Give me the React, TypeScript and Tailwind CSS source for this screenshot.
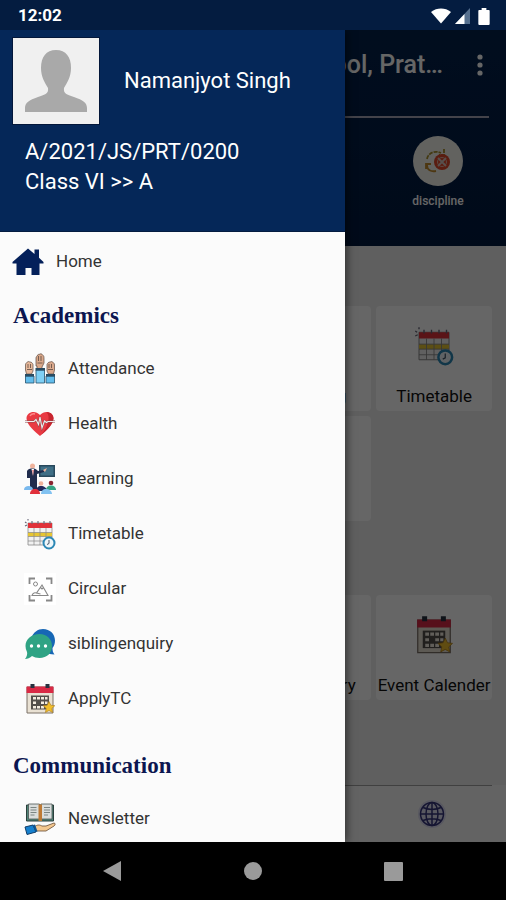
import type { ReactNode } from "react";

type Item = { label: string; icon: ReactNode };

const academics: Item[] = [
  { label: "Attendance", icon: <AttendanceIcon /> },
  { label: "Health", icon: <HealthIcon /> },
  { label: "Learning", icon: <LearningIcon /> },
  { label: "Timetable", icon: <TimetableIcon /> },
  { label: "Circular", icon: <CircularIcon /> },
  { label: "siblingenquiry", icon: <ChatIcon /> },
  { label: "ApplyTC", icon: <CalendarIcon /> },
];

const communication: Item[] = [{ label: "Newsletter", icon: <NewsletterIcon /> }];

const communicationTiles: Item[] = [
  { label: "Newsletter", icon: <NewsletterIcon /> },
  { label: "Message", icon: <ChatIcon /> },
  { label: "Class Diary", icon: <NewsletterIcon /> },
  { label: "Event Calender", icon: <CalendarIcon /> },
];

export default function App() {
  return (
    <div className="min-h-screen flex flex-col bg-black font-['Roboto','Noto_Sans',sans-serif]">
      <StatusBar />
      <div className="relative flex-1 flex flex-col overflow-hidden">
        <Dashboard />
        <div className="absolute inset-0 bg-black/60" />
        <Drawer />
      </div>
      <NavigationBar />
    </div>
  );
}

function StatusBar() {
  return (
    <div className="h-[30px] flex items-center justify-between bg-[#041c40] pt-[2px] pl-[18px] pr-4 text-white">
      <span className="text-[17px] font-bold">12:02</span>
      <div className="flex items-center gap-1">
        <svg width="20" height="16" viewBox="0 0 20 16" fill="#fff">
          <path d="M10 15.5 0 4C3 1.500 6.500.5 10 .5S17 1.500 20 4Z" />
        </svg>
        <svg width="15" height="16" viewBox="0 0 15 16">
          <path d="M15 0v16H0Z" fill="#56708f" />
          <path d="M9.500 6v10H0Z" fill="#fff" />
        </svg>
        <svg className="ml-1" width="12" height="17" viewBox="0 0 12 18" fill="#fff">
          <path d="M3.500 0h5v2H11a1 1 0 0 1 1 1v14a1 1 0 0 1-1 1H1a1 1 0 0 1-1-1V3a1 1 0 0 1 1-1h2.500Z" />
        </svg>
      </div>
    </div>
  );
}

function Drawer() {
  return (
    <aside className="absolute inset-y-0 left-0 w-[345px] overflow-hidden bg-[#fbfbfb] shadow-[2px_0_8px_rgba(0,0,0,0.5)]">
      <header className="h-[202px] bg-[#052758] border-b border-[#041c40] text-white">
        <div className="flex items-center gap-6 pt-[7px] pl-3">
          <div className="size-[88px] border border-[#03173a] bg-[#f0f0f0]">
            <svg viewBox="0 0 86 86">
              <path
                d="M43 12c10 0 15 7 15 18 0 9-4 15-7 20-1 6 4 7 10 9 9 3 13 6 13 11v4H12v-4c0-5 4-8 13-11 6-2 11-3 10-9-3-5-7-11-7-20 0-11 5-18 15-18Z"
                fill="#a9a9a9"
              />
            </svg>
          </div>
          <p className="text-[22px] leading-7">Namanjyot Singh</p>
        </div>
        <p className="mt-3 pl-[25px] text-[22px] leading-[30px]">
          A/2021/JS/PRT/0200
          <br />
          Class VI &gt;&gt; A
        </p>
      </header>

      <nav>
        <a href="#home" className="h-[59px] flex items-center gap-3 pl-3 text-[17px] text-[#333]">
          <HomeIcon />
          Home
        </a>
        <DrawerHeading>Academics</DrawerHeading>
        <DrawerList items={academics} />
        <div className="h-[15px]" />
        <DrawerHeading>Communication</DrawerHeading>
        <DrawerList items={communication} />
      </nav>
    </aside>
  );
}

function DrawerHeading({ children }: { children: ReactNode }) {
  return (
    <h2 className="h-[50px] flex items-center pl-[13px] font-['Liberation_Serif',serif] text-[23px] font-bold text-[#0c1650]">
      {children}
    </h2>
  );
}

function DrawerList({ items }: { items: Item[] }) {
  return (
    <ul>
      {items.map((item) => (
        <li key={item.label}>
          <a
            href={`#${item.label}`}
            className="h-[55px] flex items-center gap-3 pl-6 text-[17px] text-[#333]"
          >
            <span className="size-8">{item.icon}</span>
            {item.label}
          </a>
        </li>
      ))}
    </ul>
  );
}

// the screen that stays behind the open drawer
function Dashboard() {
  return (
    <main className="flex-1 flex flex-col bg-[#ededed]">
      <header className="h-[216px] bg-linear-to-b from-[#03224d] to-[#021a40] px-[17px] text-white">
        <div className="flex items-center justify-end gap-7 h-[70px]">
          <h1 className="text-[25px] font-medium">School, Prat…</h1>
          <button aria-label="More options" className="w-[18px] flex justify-center">
            <svg width="6" height="22" viewBox="0 0 6 22" fill="#fff">
              <circle cx="3" cy="3" r="2.600" />
              <circle cx="3" cy="11" r="2.600" />
              <circle cx="3" cy="19" r="2.600" />
            </svg>
          </button>
        </div>
        <div className="mt-4 border-t-2 border-[#a9a9b8] pt-[18px] flex justify-end">
          <a
            href="#discipline"
            className="w-[102px] flex flex-col items-center gap-[7px] text-xs font-medium"
          >
            <span className="size-[50px] rounded-full bg-[#f5f5ee] grid place-items-center">
              <DisciplineIcon />
            </span>
            discipline
          </a>
        </div>
      </header>

      <div className="flex-1 px-[14px]">
        <TileGrid items={academics} className="mt-[60px]" />
        <TileGrid items={communicationTiles} className="mt-[74px]" />
      </div>

      <div className="h-[57px] bg-[#f8f8f8] px-[14px]">
        <div className="h-full border-t border-[#a0a0a0] grid grid-cols-4">
          <a href="#web" aria-label="Website" className="col-start-4 grid place-items-center">
            <GlobeIcon />
          </a>
        </div>
      </div>
    </main>
  );
}

function TileGrid({ items, className }: { items: Item[]; className: string }) {
  return (
    <div className={`grid grid-cols-4 gap-[5px] ${className}`}>
      {items.map((item) => (
        <a
          key={item.label}
          href={`#${item.label}`}
          className="h-[105px] flex flex-col items-center justify-between rounded-sm bg-white pt-5 pb-[3px] text-[17px] leading-6 whitespace-nowrap text-[#111]"
        >
          <span className="size-10">{item.icon}</span>
          {item.label}
        </a>
      ))}
    </div>
  );
}

function NavigationBar() {
  return (
    <div className="h-[58px] grid grid-cols-3 bg-black px-[42px] text-[#9a9a9a]">
      <button aria-label="Back" className="grid place-items-center">
        <svg width="20" height="22" viewBox="0 0 20 22" fill="currentColor">
          <path d="M19 1v20L1 11Z" />
        </svg>
      </button>
      <button aria-label="Home" className="grid place-items-center">
        <span className="size-[18px] rounded-full bg-current" />
      </button>
      <button aria-label="Recent apps" className="grid place-items-center">
        <span className="size-[19px] rounded-[1px] bg-current" />
      </button>
    </div>
  );
}

function HomeIcon() {
  return (
    <svg width="32" height="28" viewBox="0 0 32 28" fill="#04205a">
      <path d="M16 .5 22.500 6V1.500h4.500v8.300l4.500 4.200v1.500h-4V27h-8v-7h-6v7h-9V15.500h-4V14Z" />
    </svg>
  );
}

function AttendanceIcon() {
  return (
    <svg viewBox="0 0 32 32" strokeLinejoin="round">
      <g stroke="#5b4a42" strokeWidth=".7">
        <path d="M12 13V5c0-2 1.500-1.500 1.500-3 1-1 2-.5 2.500-1 1-.5 2 0 2.500 1 1.500.5 1.500 2 1.500 4v4l-2 4v2h-5v-3Z" fill="#d9a789" />
        <path d="M1.500 17v-5c0-1.500 1-2.500 2-3 1-1 2 0 2.500 0 1.500 0 2.500 1 3 2.500V18l-1.500 3h-5Z" fill="#e8b99b" />
        <path d="M30.500 17v-5c0-1.500-1-2.500-2-3-1-1-2 0-2.500 0-1.500 0-2.500 1-3 2.500V18l1.500 3h5Z" fill="#dba98c" />
      </g>
      <g stroke="#24506c" strokeWidth=".8">
        <path d="M12 17h8.500v13H12Z" fill="#7fd0f5" />
        <path d="M1.500 23H10v7H1.500ZM22 23h8.500v7H22Z" fill="#63bdec" />
      </g>
      <path d="M11.500 15h9.500v2.500h-9.500ZM1 21h9v2.500H1ZM22 21h9v2.500h-9Z" fill="#294b61" />
      <path d="M14.500 3v5M17 3v5M4 11v4M6.500 11v4M25 11v4M27.500 11v4M13.500 10h5M3 16.500h5M24 16.500h5" stroke="#5b4a42" strokeWidth=".8" fill="none" />
    </svg>
  );
}

function HealthIcon() {
  return (
    <svg viewBox="0 0 32 32" fill="none">
      <path d="M16 28C12 24 3 18 2.500 10.500 2.500 4 11 1.500 16 7c5-5.500 13.500-3 13.500 3.500C29 18 20 24 16 28Z" fill="#e93a43" />
      <path d="M17 27c5-4 12-10 12.500-16.500C29.500 6 26 4 22.500 4.200 27 8 24 19 17 27Z" fill="#c7252f" />
      <path d="M6 8c1-2 3-2.500 5-2" stroke="#ff8b8b" strokeWidth="1.500" />
      <path d="M1 13.500h9l2-2 2.500 5L16 9l2 11 2.500-7 2 1.500 1.500-1h7" stroke="#8f4a4e" strokeWidth="1.900" />
      <path d="M1 13.500h9l2-2 2.500 5L16 9l2 11 2.500-7 2 1.500 1.500-1h7" stroke="#eee" strokeWidth="1.100" />
    </svg>
  );
}

function LearningIcon() {
  return (
    <svg viewBox="0 0 32 32">
      <path d="M15 2h16v12H15Z" fill="#28495c" />
      <path d="M16.500 3.500h13v9h-13Z" fill="#3f6f86" />
      <circle cx="8.500" cy="3" r="2.500" fill="#efb39c" />
      <path d="M3 8c1-2 3-2.500 5.500-2.500S12 6 14 8l6-1v2l-7 2v16H6V15H3Z" fill="#202c4d" />
      <path d="M7.500 6h2.500L9 13Z" fill="#fff" />
      <path d="M8.500 7h1l-.5 6Z" fill="#d33" />
      <path d="m19 7 4-2-2 4Z" fill="#efb39c" />
      <circle cx="17" cy="20.500" r="2.300" fill="#efb39c" />
      <path d="M12 28c0-3 2-5 5-5s6 2 6 5Z" fill="#222a5c" />
      <circle cx="27" cy="20" r="2.300" fill="#8b2631" />
      <path d="M22 27c0-3 2-4.500 5-4.500s5 2 5 4.500Z" fill="#35a384" />
      <path d="M0 27c0-3 2-4 4.500-4S9 24 9 27Z" fill="#79b9ee" />
      <path d="M6 31c0-3 2-5 5-5s5 2 5 5Z" fill="#e1303b" />
      <path d="M17 31c0-3 2-5 5-5s6 2 6 5Z" fill="#82c2f1" />
    </svg>
  );
}

function TimetableIcon() {
  return (
    <svg viewBox="0 0 32 32" fill="none">
      <path d="M4 5h24v22H4Z" fill="#f1f1f1" stroke="#8a8a8a" strokeWidth=".8" />
      <path d="M4 5h24v5H4Z" fill="#e0323a" />
      <path d="M4 14.500h24v4H4Z" fill="#e6c532" />
      <path d="M10 10v17M16 10v17M22 10v17M4 14.500h24M4 18.500h24M4 23h24" stroke="#888" strokeWidth=".7" />
      <path d="M8 3v3M14 3v3M20 3v3M26 3v3M1 4l1.500 1M4 1v1.500M1 8l2-1" stroke="#667" strokeWidth="1.100" />
      <circle cx="25" cy="25" r="5.500" fill="#eef6fa" stroke="#2b87b5" strokeWidth="2" />
      <path d="M25 22v3.500l-2 1" stroke="#456" strokeWidth="1" />
    </svg>
  );
}

function CircularIcon() {
  return (
    <svg viewBox="0 0 32 32" fill="none" stroke="#888">
      <path d="M0 0h32v32H0Z" fill="#fff" stroke="none" />
      <path d="M5.500 11V5.500H11M22 5.500h5.500V11M5.500 22v5.500H11M22 27.500h5.500V22" strokeWidth="1.800" />
      <circle cx="11.500" cy="11" r="2" strokeWidth="1" />
      <path d="M8 22.500c1-3 3-3 4.500-2.500L18 12l6 10.500ZM12.500 20l4 1M16 14l2 2 1-1" strokeWidth="1.100" />
    </svg>
  );
}

function ChatIcon() {
  return (
    <svg viewBox="0 0 32 32">
      <path d="M7 11C9 4 14 1 19 1c7 0 12 5 12 11.500 0 3-1 5.500-2.500 7.500 0 3 .5 4.500 2 6.500-4 0-6-1-7.500-2Z" fill="#1767b5" />
      <path d="M15.500 6C23 6 28 11 28 18s-5 12-12.500 12c-3 0-5.500-1-7.500-2-2 2-4.500 3-7 3 2-2.500 2.500-5 2-7-1-2-1.500-4-1.500-6 0-7 6-12 14-12Z" fill="#2fa384" />
      <g fill="#fff">
        <circle cx="7.500" cy="18" r="1.700" />
        <circle cx="14.500" cy="18" r="1.700" />
        <circle cx="21.500" cy="18" r="1.700" />
      </g>
    </svg>
  );
}

function CalendarIcon() {
  return (
    <svg viewBox="0 0 32 32">
      <path d="M3 4h26v26H3Z" fill="#e9e1d3" stroke="#7b7067" />
      <path d="M2.500 3.500h27V10h-27Z" fill="#d92a45" />
      <path d="M6.500 1h4v4h-4ZM21.500 1h4v4h-4Z" fill="#27313f" />
      <path d="M7 12.500h18v14H7Z" fill="#534f4a" />
      <path d="M9 14h3v2.500H9ZM13 14h3v2.500h-3ZM17 14h3v2.500h-3ZM21 14h2.500v2.500H21ZM9 18.500h3V21H9ZM17 18.500h3V21h-3ZM21 18.500h2.500V21H21ZM9 23h3v2.500H9ZM13 23h3v2.500h-3ZM17 23h3v2.500h-3Z" fill="#f3ecdf" />
      <path d="m25 18.500 1.800 3.700 4 .5-3 2.800.8 4-3.600-2-3.600 2 .8-4-3-2.800 4-.5Z" fill="#f0bd2b" stroke="#a97a18" strokeWidth=".6" />
    </svg>
  );
}

function NewsletterIcon() {
  return (
    <svg viewBox="0 0 32 32" strokeLinejoin="round">
      <path d="M2.500 2h27v16h-27Z" fill="#4f8477" stroke="#2b3f3c" />
      <path d="M4.500 1h11v15h-11ZM17 1h11v15H17Z" fill="#d9dddc" stroke="#4b5553" strokeWidth=".8" />
      <path d="M14.500 1.500h3.500V18h-3.500Z" fill="#bd7a35" />
      <path d="M6.500 4.500h6M6.500 7h6M6.500 9.500h6M6.500 12h4M20 4.500h6M20 7h6M20 9.500h6M20 12h4" stroke="#707a78" strokeWidth=".9" />
      <path d="M10 24c4-3 6-2 8-1h4l8-3c1.500 0 1.500 2 0 3l-8 5H11Z" fill="#f4c890" stroke="#664a31" strokeWidth=".8" />
      <path d="m1 24 8-2 3 7-9 2.500Z" fill="#1680ce" stroke="#123c66" />
      <path d="m9 22 2-.5 2.500 7-2 .5Z" fill="#125690" />
    </svg>
  );
}

function DisciplineIcon() {
  return (
    <svg width="28" height="28" viewBox="0 0 28 28" fill="none">
      <path d="M3 12c1-6 8-9 14-6M20 2v6h-5" stroke="#a8902c" strokeWidth="1.800" strokeDasharray="4 1" />
      <path d="M3 18c0 5 4 7 9 6M2 22v-5h5" stroke="#c08a2c" strokeWidth="1.800" />
      <circle cx="18" cy="15" r="8" fill="#e0492c" />
      <path d="m14 11 8 8M22 11l-8 8" stroke="#dcc8c0" strokeWidth="1.800" />
      <circle cx="18" cy="15" r="4.500" stroke="#e6b8a8" strokeWidth="1" />
    </svg>
  );
}

function GlobeIcon() {
  return (
    <svg width="30" height="30" viewBox="0 0 30 30" fill="none" stroke="#34347c" strokeWidth="1.500">
      <circle cx="15" cy="15" r="14" fill="#dcdcf0" stroke="none" />
      <circle cx="15" cy="15" r="11.500" />
      <ellipse cx="15" cy="15" rx="6" ry="11.500" />
      <path d="M15 3.500v23M3.500 15h23M6 8.500c5 2.500 13 2.500 18 0M6 21.500c5-2.500 13-2.500 18 0" />
    </svg>
  );
}
